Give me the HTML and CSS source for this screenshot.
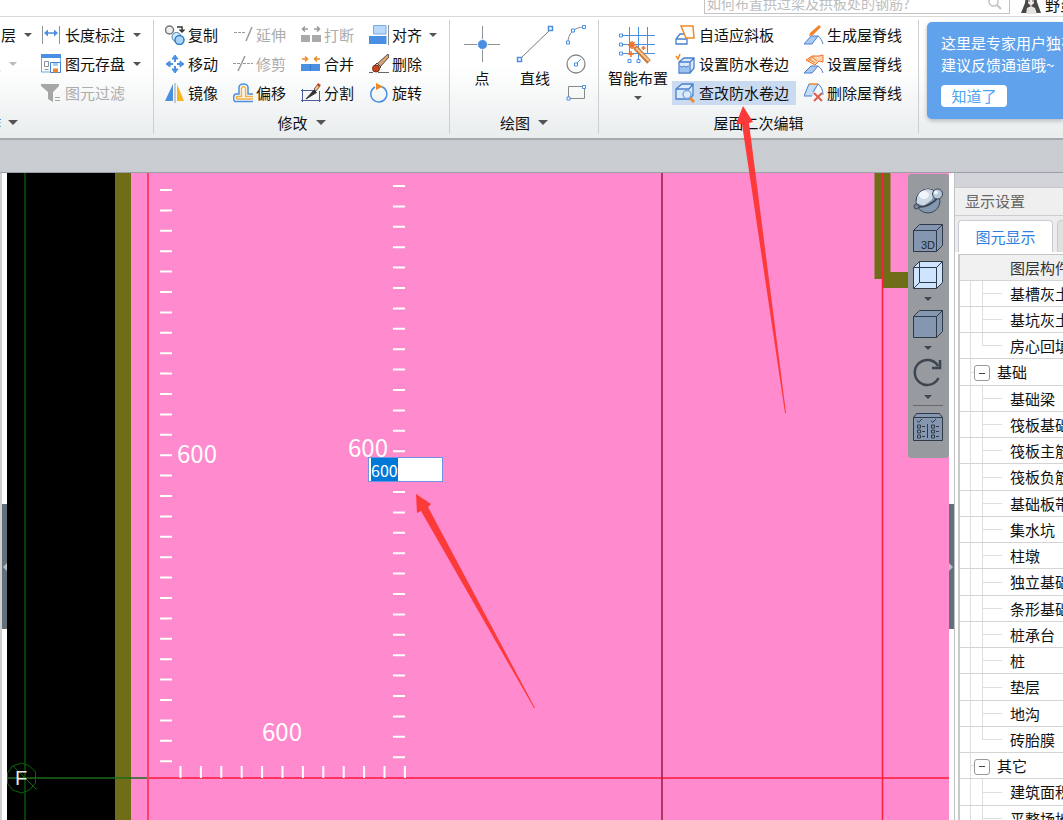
FILE: index.html
```html
<!DOCTYPE html>
<html lang="zh-CN">
<head>
<meta charset="utf-8">
<meta name="viewport" content="width=device-width, initial-scale=1">
<title>屋面二次编辑</title>
<link rel="stylesheet" href="styles.css">
</head>
<body>
<div class="app">
  <header class="topbar">
    <div class="search">
      <input class="search-input" type="text" aria-label="搜索" placeholder="如何布置拱过梁及拱板处的钢筋?">
      <svg class="search-icon" width="14" height="14" viewBox="0 0 14 14" fill="none" stroke="#c4c4c4" stroke-width="1.5"><circle cx="5.5" cy="5.5" r="4.5"/><path d="M9 9l4 4" stroke-width="2"/></svg>
    </div>
    <div class="user">
      <svg width="20" height="20" viewBox="0 0 20 20"><path d="M5 0h10l1 8 4 11H0l4-10z" fill="#4a4747"/><path d="M7 2h6v7l-3 3-3-3z" fill="#f3ebe8"/><path d="M6 14l4-2 4 2 2 6H5z" fill="#e6e2e2"/><path d="M7 7h2M11 7h2" stroke="#555" /></svg>
      <span>野蛮</span>
    </div>
  </header>

  <nav class="ribbon">
    <section class="group group-common">
      <div class="group-body common-body">
        <div class="stack">
          <button class="cmd"><span>它层</span><i class="caret"></i></button>
          <button class="cmd off"><span>板</span><i class="caret"></i></button>
          <button class="cmd off" aria-label="更多"><i class="caret"></i></button>
        </div>
        <div class="stack">
          <button class="cmd"><svg class="ico" viewBox="0 0 20 20" fill="none"><path d="M1.500 1v18M18.500 1v18" stroke="#8b9299"/><path d="M4 8h12" stroke="#4a90e2" stroke-width="1.500"/><path d="M7 4.500L3 8l4 3.500zM13 4.500L17 8l-4 3.500z" fill="#4a90e2"/></svg><span>长度标注</span><i class="caret"></i></button>
          <button class="cmd"><svg class="ico" viewBox="0 0 20 20" fill="none"><path d="M.5 2v16H9M19.500 2v7" stroke="#6fa4e2"/><path d="M0 0h20v4H0z" fill="#4a90e2"/><path d="M3.500 7.500h4v5h-4zM3.500 15.500h4" stroke="#8b9299"/><path d="M9.500 8.500h10v10h-10z" stroke="#3f83d3" fill="#fff"/><path d="M12 9h5v3h-5z" fill="#a9cbf3"/><path d="M12 14.500h5v4h-5z" fill="#f0832b"/></svg><span>图元存盘</span><i class="caret"></i></button>
          <button class="cmd off"><svg class="ico" viewBox="0 0 20 20"><path d="M0 1h18v2l-6 6v10l-5-3V9L0 3z" fill="#a6a6a6"/><path d="M14 14.500h5M14 17.500h5" stroke="#a6a6a6"/></svg><span>图元过滤</span></button>
        </div>
      </div>
      <button class="group-name name-left"><span>作</span><i class="caret big"></i></button>
    </section>

    <section class="group group-modify">
      <div class="group-body grid4">
        <button class="cmd"><svg class="ico" viewBox="0 0 20 20" fill="none"><circle cx="4.500" cy="5" r="4" stroke="#777" stroke-width="1.500" fill="#eee"/><path d="M12 2h5v4M14.500 4.500L17 7l2.500-2.500" stroke="#333" stroke-width="1.500"/><circle cx="11.500" cy="12" r="4.500" fill="#d8eafb" stroke="#3f83bd"/><circle cx="14.500" cy="15" r="4.500" fill="#a9d3f5" stroke="#2f7fc4" stroke-width="1.500"/></svg><span>复制</span></button>
        <button class="cmd off"><svg class="ico" viewBox="0 0 20 20" fill="none" stroke="#999"><path d="M1 7.500h12" stroke-dasharray="3 1"/><path d="M13 16l6-14" stroke-width="1.500"/></svg><span>延伸</span></button>
        <button class="cmd off"><svg class="ico" viewBox="0 0 20 20"><path d="M0 10h9v7H0zM11 10h9v7h-9z" fill="#aaa"/><path d="M2 4h5M13 4h5M4 1.500L1.500 4 4 6.500M16 1.500L18.500 4 16 6.500" fill="none" stroke="#999" stroke-width="1.500"/></svg><span>打断</span></button>
        <button class="cmd"><svg class="ico" viewBox="0 0 20 20"><path d="M4.500.5H17v8.500H4.500z" fill="#b9d8fb" stroke="#76aae8"/><path d="M0 11h17.500v8H0z" fill="#4a90e2"/><path d="M19.500 0v20" stroke="#8b9299"/></svg><span>对齐</span><i class="caret"></i></button>
        <button class="cmd"><svg class="ico" viewBox="0 0 20 20" fill="#4a90e2" stroke="#4a90e2"><path d="M10 1l3 4H7zM10 19l3-4H7zM1 10l4-3v6zM19 10l-4-3v6z"/><path d="M10 4v4M10 12v4M4 10h4M12 10h4" stroke-width="2"/></svg><span>移动</span></button>
        <button class="cmd off"><svg class="ico" viewBox="0 0 20 20" fill="none" stroke="#999"><path d="M0 9.500h7M10 9.500h10" stroke-dasharray="3 1"/><path d="M5 17L12 2" stroke-width="1.500"/></svg><span>修剪</span></button>
        <button class="cmd"><svg class="ico" viewBox="0 0 20 20"><path d="M0 10h19v7H0z" fill="#4a90e2"/><path d="M9.500 10v7" stroke="#3577c9"/><path d="M1 5h6M19 5h-6M4 2.500L6.500 5 4 7.500M16 2.500L13.500 5 16 7.500" fill="none" stroke="#f08a24" stroke-width="1.500"/></svg><span>合并</span></button>
        <button class="cmd"><svg class="ico" viewBox="0 0 20 20"><path d="M0 18.500h4M9 18.500h11" stroke="#666"/><path d="M19 0L8 10l3 3L20 3z" fill="#d8a878" stroke="#59483c"/><path d="M8 9l4 4-2 2-4-4z" fill="#ddd" stroke="#444"/><ellipse cx="7" cy="14.500" rx="3.500" ry="3.500" fill="#c8461c" stroke="#6c2b18"/></svg><span>删除</span></button>
        <button class="cmd"><svg class="ico" viewBox="0 0 20 20"><path d="M8 1v17H0z" fill="#4a90e2"/><path d="M12 1v17h7z" fill="#f9b31b"/><path d="M10 0v20" stroke="#999"/></svg><span>镜像</span></button>
        <button class="cmd"><svg class="ico" viewBox="0 0 20 20" fill="none"><path d="M20 18.500H2C0 17 0 12 2.500 11H6V4c1-4 8-4 9 0v7h5" stroke="#4a90e2" stroke-width="1.500"/><path d="M20 16H4c-1-1-1-2 0-2.500h4.500V5c1-2 3-2 4 0v8.500H20" stroke="#f5b041" stroke-width="1.500"/></svg><span>偏移</span></button>
        <button class="cmd"><svg class="ico" viewBox="0 0 20 20" fill="none"><path d="M0 7.500h12M1.500 6v13M0 17.500h20M18.500 8v11" stroke="#4a5c9a"/><path d="M5 16L13 7l2.500 2.500z" fill="#333" stroke="#333"/><path d="M13 6l4-5 2 2-4 5z" fill="#e8c39e" stroke="#8a5b3a"/><path d="M17 0l3 2-2 2-2-2z" fill="#c8461c"/></svg><span>分割</span></button>
        <button class="cmd"><svg class="ico" viewBox="0 0 20 20" fill="none"><path d="M12.500 3.500A8 8 0 1 1 6 4" stroke="#4a90e2" stroke-width="1.500"/><path d="M7 0l7 3.500L7 7z" fill="#f08a24"/></svg><span>旋转</span></button>
      </div>
      <button class="group-name"><span>修改</span><i class="caret big"></i></button>
    </section>

    <section class="group group-draw">
      <div class="group-body draw-body">
        <button class="cmd-big"><svg width="38" height="38" viewBox="0 0 38 38"><path d="M19.500 1v36M1 19.500h36" stroke="#8b9299"/><circle cx="19.500" cy="19.500" r="5" fill="#4a90e2" stroke="#fff"/></svg><span>点</span></button>
        <button class="cmd-big"><svg width="38" height="38" viewBox="0 0 38 38" fill="#fff"><path d="M4 34L35 4" stroke="#777"/><path d="M1.500 32.500h4v4h-4zM32.500 1.500h4v4h-4z" stroke="#4a90e2" stroke-width="1.500"/></svg><span>直线</span></button>
        <div class="stack small-tools">
          <button class="cmd" aria-label="弧线"><svg class="ico" viewBox="0 0 20 20" fill="#fff"><path d="M2 17C2 9 8 2 18 2" fill="none" stroke="#888"/><path d="M.5 16h3v3h-3zM5.500 4h3v3h-3zM16.500.5h3v3h-3z" stroke="#4a90e2"/></svg></button>
          <button class="cmd" aria-label="圆"><svg class="ico" viewBox="0 0 20 20" fill="none"><circle cx="10" cy="10" r="9" stroke="#888" stroke-width="1.300"/><path d="M10 10l5-5" stroke="#4a90e2"/><path d="M8.500 9h3v3h-3z" stroke="#4a90e2" fill="#fff"/></svg></button>
          <button class="cmd" aria-label="矩形"><svg class="ico" viewBox="0 0 20 20" fill="none"><path d="M2.500 3.500h16v12h-16z" stroke="#888"/><path d="M1 14h3v3H1zM16.500 2.500h3v3h-3z" stroke="#4a90e2" fill="#fff"/></svg></button>
        </div>
      </div>
      <button class="group-name"><span>绘图</span><i class="caret big"></i></button>
    </section>

    <section class="group group-roof">
      <div class="group-body roof-body">
        <button class="cmd-big"><svg width="38" height="40" viewBox="0 0 38 40" fill="none"><path d="M10.500 2v28M19.500 2v33M28.500 2v26M1 10.500h35M1 19.500h35M1 28.500h35" stroke="#4a90e2"/><path d="M.5 9h3v3h-3zM.5 18h3v3h-3zM.5 27h3v3h-3zM9 34.500h3v3H9zM18 34.500h3v3h-3z" stroke="#4a90e2" fill="#fff"/><path d="M16 22l14 15" stroke="#c9783a" stroke-width="5"/><path d="M17 23l13 13" stroke="#f7c998" stroke-width="2"/><path d="M9 20h8M13 16v8M10.500 17l5 6M15.500 17l-5 6M24.500 21v4M22.500 23h4M12 26v6M9 29h6" stroke="#f0702b" stroke-width="1.500"/></svg><span>智能布置</span><i class="caret"></i></button>
        <div class="stack roof-a">
          <button class="cmd"><svg class="ico" viewBox="0 0 20 20" fill="#fff"><path d="M1 14l4-5h9l-2 5v5H1zM1 14h11" stroke="#4a80cc" stroke-width="1.300"/><path d="M6 1h12l1 12H11L6 1z" stroke="#f08a24" stroke-width="1.500"/></svg><span>自适应斜板</span></button>
          <button class="cmd"><svg class="ico" viewBox="0 0 20 20" fill="#dcebfb"><path d="M4 8l5-4h10v10l-4 5H4zM4 8h11v11M15 8l4-4" stroke="#4a80cc" stroke-width="1.300"/><path d="M5 13h9v5H5z" fill="#9cc3f0"/><path d="M5 12l2 1 2-1 2 1 3-1" stroke="#4a80cc" fill="none"/><path d="M1 2l2 3 2-5" fill="none" stroke="#f08a24" stroke-width="1.500"/></svg><span>设置防水卷边</span></button>
          <button class="cmd active"><svg class="ico" viewBox="0 0 20 20" fill="#dcebfb"><path d="M1 6l6-5h11v11l-3 4H1zM1 6h13M14 6l4-5" stroke="#4a80cc" stroke-width="1.300"/><circle cx="12" cy="11.500" r="4" stroke="#7ba7e2" stroke-width="1.500"/><path d="M14 16l2-2 4 4-2 2z" fill="#f08a24"/></svg><span>查改防水卷边</span></button>
        </div>
        <div class="stack">
          <button class="cmd"><svg class="ico" viewBox="0 0 20 20" fill="none"><path d="M0 19l7-8h7l-6 8z" fill="#a9cbf3" stroke="#4a80cc"/><path d="M14 11c3 2 4 5 5 8" stroke="#4a80cc"/><path d="M6 8L15 0l2 2-8 8-4 1z" fill="#f0832b"/></svg><span>生成屋脊线</span></button>
          <button class="cmd"><svg class="ico" viewBox="0 0 20 20" fill="none"><path d="M0 19l7-7h7l-6 7z" fill="#a9cbf3" stroke="#4a80cc"/><path d="M14 12c3 2 4 4 5 7" stroke="#4a80cc"/><path d="M2 6l6-4h7l4-1v7l-4-1-4 4z" fill="#fbd5b2" stroke="#f0702b"/><path d="M5 5l6 4M8 3l5 4M4 7l6-5" stroke="#f0832b"/></svg><span>设置屋脊线</span></button>
          <button class="cmd"><svg class="ico" viewBox="0 0 20 20" fill="none"><path d="M0 13L5 1h9l-5 12z" fill="#c5dcf7"/><path d="M0 13h8M0 13L5 1M14 1c3 2 5 6 5 11M14 1L9 9" stroke="#4a80cc"/><path d="M5 1h9" stroke="#f08a24" stroke-width="1.500"/><path d="M10 10l8 8M18 10l-8 8" stroke="#dd5f4c" stroke-width="2"/></svg><span>删除屋脊线</span></button>
        </div>
      </div>
      <div class="group-name"><span>屋面二次编辑</span></div>
    </section>

    <aside class="notice">
      <p>这里是专家用户独有</p>
      <p>建议反馈通道哦~</p>
      <button class="notice-btn">知道了</button>
    </aside>
  </nav>

  <div class="band"></div>

  <main class="workspace">
    <div class="side left-side"><button class="handle" aria-label="收起左栏"><svg width="5" height="8" viewBox="0 0 5 8"><path d="M5 0v8L1 4z" fill="#b9bec3"/></svg></button></div>

    <div class="canvas">
      <svg class="drawing" width="100%" height="100%">
        <rect width="100%" height="100%" fill="#000"/>
        <rect x="124" width="100%" height="100%" fill="#ff8acd"/>
        <rect x="108" width="16" height="100%" fill="#6f6d18"/>
        <path d="M867.500 0h16v99h18v16h-26v-9h-8z" fill="#6f6d18"/>
        <path d="M18 0v1200" stroke="#063f06" stroke-width="2"/>
        <path d="M0 605h141" stroke="#1d6a1b" stroke-width="1.500"/>
        <path d="M141 605h2400" stroke="#ff3560" stroke-width="2"/>
        <path d="M141 0v1200" stroke="#ff3f66" stroke-width="2"/>
        <path d="M655 0v1200" stroke="#96183c" stroke-width="1.500"/>
        <path d="M875.500 0v1200" stroke="#f5203c" stroke-width="1.500"/>
        <path d="M159 16v590" stroke="#fff" stroke-width="12" stroke-dasharray="2 18.400"/>
        <path d="M392 12v282M392 318v273" stroke="#fff" stroke-width="12" stroke-dasharray="2 18.400"/>
        <path d="M172.500 599h227" stroke="#fff" stroke-width="12" stroke-dasharray="2 18.400"/>
        <path d="M14.500 590l8 3 6 6v11l-6 7-8 3-9-3-5-7v-10l5-7zM6 593l24 24" fill="none" stroke="#0b650b"/>
        <text class="axis" x="8" y="612">F</text>
        <text class="dim" x="170" y="290">600</text>
        <text class="dim" x="341" y="284">600</text>
        <text class="dim" x="255" y="568">600</text>
      </svg>
      <input class="dim-input" id="dim" type="text" value="600" aria-label="尺寸">
      <div class="viewbar">
        <button class="vb" aria-label="动态观察"><svg width="30" height="30" viewBox="0 0 30 30"><circle cx="15" cy="15" r="12" fill="#8497b0" stroke="#3c4652"/><path d="M4.500 10c4-8 14-9 18-3l-4 7-8 6-7-3z" fill="#cbd8e6"/><ellipse cx="11" cy="9" rx="5" ry="4" fill="#f2f6fa"/><path d="M3 20c8 3 18-3 22-9" fill="none" stroke="#3c4652" stroke-width="2"/><circle cx="24.500" cy="8" r="5" fill="#b9c8d9" stroke="#3c4652"/><circle cx="23" cy="6.500" r="2" fill="#eef3f8"/><circle cx="3.500" cy="20.500" r="2.500" fill="#77869a" stroke="#3c4652"/></svg></button>
        <button class="vb" aria-label="三维"><svg width="30" height="30" viewBox="0 0 30 30" fill="#8597b0" stroke="#303a46"><path d="M.5 7.500l6-6h23v21l-6 6H.5zM.5 7.500h23v21M23.500 7.500l6-6"/><text x="8" y="26" class="tiny">3D</text></svg></button>
        <button class="vb" aria-label="线框"><svg width="30" height="30" viewBox="0 0 30 30" fill="#cfe5ff" stroke="#303a46"><path d="M.5 7.500l6-6h23v21l-6 6H.5z"/><path d="M.5 7.500h23v21M23.500 7.500l6-6M6.500 1.500v21h17M.5 28.500l6-6" fill="none"/></svg></button>
        <i class="caret vcaret"></i>
        <button class="vb" aria-label="视图"><svg width="30" height="30" viewBox="0 0 30 30" fill="#8597b0" stroke="#303a46"><path d="M.5 7.500l6-6h23v21l-6 6H.5zM.5 7.500h23v21M23.500 7.500l6-6"/></svg></button>
        <i class="caret vcaret"></i>
        <button class="vb" aria-label="旋转视图"><svg width="30" height="30" viewBox="0 0 30 30" fill="none" stroke="#3c4652"><path d="M25.500 20A12.500 12.500 0 1 1 25 8" stroke-width="2.500"/><path d="M27 2v8h-8" stroke-width="2.500"/></svg></button>
        <i class="caret vcaret"></i>
        <hr class="vsep">
        <button class="vb" aria-label="显示设置"><svg width="30" height="30" viewBox="0 0 30 30" fill="#8597b0" stroke="#303a46"><path d="M.5 5.500l3-4h23l3 4v23H.5zM.5 5.500h29"/><path d="M4 8.500l1.500 2L9 7M18 8.500l1.500 2L23 7M14.500 12v14M4.500 13h3v3h-3zM4.500 18h3v3h-3zM4.500 23h3v3h-3zM18.500 13h3v3h-3zM18.500 18h3v3h-3zM18.500 23h3v3h-3zM9 14.500h3M9 19.500h3M9 24.500h3M23 14.500h3M23 19.500h3M23 24.500h3" fill="none"/></svg></button>
      </div>
    </div>

    <div class="side right-side"><button class="handle" aria-label="收起右栏"><svg width="5" height="8" viewBox="0 0 5 8"><path d="M0 0v8l4-4z" fill="#b9bec3"/></svg></button></div>

    <aside class="panel">
      <div class="panel-top"></div>
      <h2 class="panel-title">显示设置</h2>
      <div class="tabs"><button class="tab selected">图元显示</button><button class="tab" aria-label="楼层显示"></button></div>
      <div class="tree-wrap">
      <table class="tree">
        <thead><tr><th>图层构件</th></tr></thead>
        <tbody>
          <tr><td class="leaf">基槽灰土</td></tr>
          <tr><td class="leaf">基坑灰土</td></tr>
          <tr><td class="leaf last">房心回填</td></tr>
          <tr><td class="branch"><button class="fold" aria-label="折叠基础"></button>基础</td></tr>
          <tr><td class="leaf">基础梁</td></tr>
          <tr><td class="leaf">筏板基础</td></tr>
          <tr><td class="leaf">筏板主筋</td></tr>
          <tr><td class="leaf">筏板负筋</td></tr>
          <tr><td class="leaf">基础板带</td></tr>
          <tr><td class="leaf">集水坑</td></tr>
          <tr><td class="leaf">柱墩</td></tr>
          <tr><td class="leaf">独立基础</td></tr>
          <tr><td class="leaf">条形基础</td></tr>
          <tr><td class="leaf">桩承台</td></tr>
          <tr><td class="leaf">桩</td></tr>
          <tr><td class="leaf">垫层</td></tr>
          <tr><td class="leaf">地沟</td></tr>
          <tr><td class="leaf last">砖胎膜</td></tr>
          <tr><td class="branch"><button class="fold" aria-label="折叠其它"></button>其它</td></tr>
          <tr><td class="leaf">建筑面积</td></tr>
          <tr><td class="leaf">平整场地</td></tr>
        </tbody>
      </table>
      </div>
    </aside>
  </main>

  <svg class="pointers" width="800" height="720" viewBox="0 0 800 720" fill="#fd3a3a"><path d="M743 106l10 16-4 1 37 290h-1L742 124l-6 0z"/><path d="M416 494l15 10-3 3 107 201h-1L421 511l-4 2z"/></svg>
</div>
<script src="main.js"></script>
</body>
</html>
```
FILE: main.js
```js
const dim = document.getElementById('dim');
dim.focus();
dim.select();
```
FILE: styles.css
```css
* { box-sizing: border-box; }

body {
  margin: 0;
  font-family: "Noto Sans CJK SC", "Liberation Sans", sans-serif;
  font-size: 15px;
  line-height: 22px;
  color: #111;
}

button {
  border: 0;
  padding: 0;
  margin: 0;
  background: none;
  font: inherit;
  color: inherit;
  white-space: nowrap;
}

.app {
  position: relative;
  display: flex;
  flex-direction: column;
  height: 100vh;
  overflow: hidden;
}

/* top bar */
.topbar {
  display: flex;
  justify-content: flex-end;
  align-items: flex-end;
  height: 17px;
  border-bottom: 1px solid #d9d9d9;
  background: #fff;
  overflow: hidden;
}
.search {
  display: flex;
  align-items: center;
  width: 306px;
  height: 22px;
  margin-bottom: 2px;
  padding: 0 7px 0 2px;
  border: 1px solid #c3c3c3;
}
.search-input {
  flex: 1;
  min-width: 0;
  border: 0;
  padding: 0;
  outline: 0;
  background: none;
  font: inherit;
  font-size: 14px;
}
.search-input::placeholder { color: #bdbdbd; }
.user {
  display: flex;
  align-items: flex-end;
  gap: 4px;
  width: 42px;
  margin-left: 11px;
  white-space: nowrap;
}
.user svg { flex: none; margin-bottom: 2px; }

/* ribbon */
.ribbon {
  display: flex;
  flex: none;
  padding-top: 3px;
  background: linear-gradient(#fff 40%, #e9edee);
  overflow: hidden;
}
.group {
  display: flex;
  flex: none;
  flex-direction: column;
  border-right: 1px solid #cdd0d2;
  margin-bottom: 4px;
}
.group-body { display: flex; height: 87px; }
.group-name {
  display: flex;
  align-items: center;
  justify-content: center;
  gap: 8px;
  height: 27px;
  padding-top: 4px;
}
.stack { display: flex; flex-direction: column; }
.cmd {
  display: flex;
  align-items: center;
  gap: 3px;
  height: 29px;
}
.ico { flex: none; width: 20px; height: 20px; }
.caret {
  flex: none;
  border: 4px solid transparent;
  border-top-color: #555;
  border-bottom: 0;
  margin-left: 4px;
}
.caret.big { border-width: 5px 5px 0; margin-left: 0; }
.off { color: #acacac; }
.off .caret { border-top-color: #b9b9b9; }

.group-common { margin-left: -14px; width: 168px; }
.common-body { display: grid; grid-template-columns: 55px 1fr; }
.common-body .cmd { gap: 4px; }
.name-left { justify-content: flex-start; gap: 7px; }

.group-modify { width: 296px; padding-left: 11px; }
.group-modify .group-name { padding-right: 11px; }
.grid4 { display: grid; grid-template-columns: repeat(4, 68px); grid-auto-rows: 29px; }

.group-draw { width: 149px; }
.draw-body { padding-left: 13px; gap: 15px; }
.small-tools { margin-left: -3px; }
.cmd-big {
  display: flex;
  flex-direction: column;
  align-items: center;
  padding-top: 5px;
}
.cmd-big span { margin-top: 4px; }
.cmd-big .caret { margin: 7px 0 0; }

.group-roof { width: 320px; }
.roof-body { padding-left: 9px; }
.roof-a { width: 124px; margin: 0 8px 0 4px; }
.roof-a .cmd { padding-left: 3px; gap: 4px; }
.roof-body .cmd-big span { margin-top: 2px; }
.roof-a .active {
  height: 24px;
  margin-top: 3px;
  background: #c9daf1;
}

.notice {
  flex: 1;
  min-width: 0;
  margin: 2px 0 19px 8px;
  padding: 10px 0 12px 14px;
  border-radius: 5px 0 0 5px;
  background: #61a2ec;
  box-shadow: 0 2px 4px #b4b9bf;
  color: #fff;
  white-space: nowrap;
  overflow: hidden;
}
.notice p { margin: 0; }
.notice-btn {
  width: 66px;
  height: 22px;
  margin-top: 9px;
  border-radius: 4px;
  background: #fff;
  color: #4da3f0;
}

.band {
  flex: none;
  height: 35px;
  border-top: 2px solid #a5a8ac;
  border-bottom: 1px solid #9b9fa6;
  background: #c9ccd1;
}

/* workspace */
.workspace { display: flex; flex: 1; min-height: 0; }
.side { display: flex; flex: none; padding-top: 331px; background: #fff; }
.left-side { width: 7px; border-left: 2px solid #cfcfcf; }
.right-side { width: 5px; }
.handle {
  display: flex;
  align-items: center;
  width: 5px;
  height: 125px;
  background: #63707a;
}
.canvas { position: relative; flex: 1; min-width: 0; overflow: hidden; }
.drawing { display: block; }
.dim { font-size: 24px; fill: #fff; }
.axis { font-size: 20px; fill: #e4e4e4; font-family: "Liberation Sans", sans-serif; }
.dim-input {
  position: absolute;
  left: 361px;
  top: 284px;
  width: 75px;
  height: 25px;
  padding: 0 2px;
  border: 1px solid #6f93e0;
  outline: 0;
  background: #fff;
  font: inherit;
  font-size: 16px;
  caret-color: transparent;
}
.dim-input::selection { background: #0078d7; color: #fff; }

.viewbar {
  position: absolute;
  top: 1px;
  right: 0;
  display: flex;
  flex-direction: column;
  align-items: center;
  width: 41px;
  padding: 12px 2px 16px 0;
  border-radius: 3px;
  background: #979a9e;
}
.vb { display: flex; margin-bottom: 7px; }
.vcaret { margin: 0 0 8px; border-top-color: #3c4652; }
.vsep { width: 30px; margin: -2px 0 6px; border: 0; border-top: 1px solid #6d6763; }
.viewbar .vb:last-child { margin: 0; }
.tiny { font-size: 11px; fill: #202833; stroke: none; font-family: "Liberation Sans", sans-serif; }

/* panel */
.panel {
  display: flex;
  flex-direction: column;
  flex: 0 0 109px;
  min-width: 0;
  border-left: 1px solid #bfc1c4;
  background: #ececee;
  overflow: hidden;
}
.panel-top { flex: none; height: 15px; border-bottom: 1px solid #c5c7cb; background: #d2d4da; }
.panel-title {
  flex: none;
  margin: 0;
  padding: 2px 0 3px 10px;
  border-bottom: 1px solid #cbcdd1;
  background: #efefef;
  color: #666;
  font-size: 15px;
  font-weight: 400;
}
.tabs { display: flex; flex: none; gap: 4px; padding: 4px 0 0 3px; }
.tab {
  flex: none;
  width: 95px;
  height: 32px;
  border: 1px solid #c9cbd0;
  border-bottom: 0;
  border-radius: 4px 4px 0 0;
  background: #e0e0e2;
}
.selected { background: #fff; color: #2f80e0; }
.tree-wrap {
  flex: 1;
  min-height: 0;
  padding: 2px 0 0 3px;
  background: #fff;
  overflow: hidden;
}
.tree {
  width: 100%;
  table-layout: fixed;
  border-collapse: separate;
  border-spacing: 0;
  border-left: 2px solid #c9c9c9;
}
.tree th, .tree td {
  height: 26px;
  padding: 0 0 0 50px;
  border-bottom: 1px solid #d4d4d4;
  font-weight: 400;
  text-align: left;
  line-height: 22px;
  white-space: nowrap;
  overflow: hidden;
}
.tree th { height: 27px; border-top: 1px solid #c4c4c4; background: #f0f0f0; color: #333; }
.tree tbody tr:nth-child(4n) td { height: 27px; }
.tree td {
  --line: linear-gradient(#dedede, #dedede);
  background: var(--line) 10px 0 / 1px 100% no-repeat, var(--line) 22px 0 / 1px 100% no-repeat, var(--line) 22px 50% / 20px 1px no-repeat;
}
.tree .last {
  background: var(--line) 10px 0 / 1px 100% no-repeat, var(--line) 22px 0 / 1px 50% no-repeat, var(--line) 22px 50% / 20px 1px no-repeat;
}
.tree .branch {
  padding-left: 14px;
  background: var(--line) 10px 0 / 1px 100% no-repeat, var(--line) 10px 50% / 6px 1px no-repeat;
}
.fold {
  width: 16px;
  height: 16px;
  margin-right: 7px;
  border: 1px solid #999;
  border-radius: 3px;
  background: linear-gradient(#444, #444) center / 6px 1px no-repeat #fff;
  vertical-align: -2px;
}

.pointers { position: absolute; left: 0; top: 0; pointer-events: none; }
```
